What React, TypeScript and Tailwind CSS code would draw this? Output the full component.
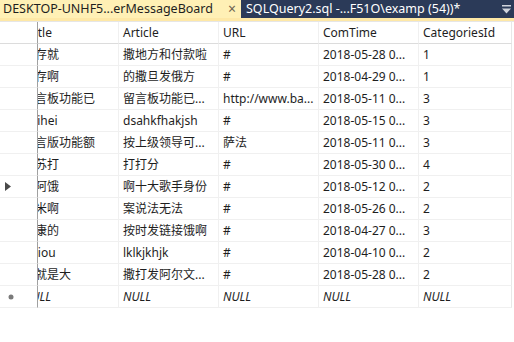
import React from "react";

const rows: { t: string; a: string; u: string; c: string; k: string }[] = [
  { t: "保存就", a: "撒地方和付款啦", u: "#", c: "2018-05-28 0...", k: "1" },
  { t: "保存啊", a: "的撒旦发俄方", u: "#", c: "2018-04-29 0...", k: "1" },
  { t: "留言板功能已", a: "留言板功能已...", u: "http://www.ba...", c: "2018-05-11 0...", k: "3" },
  { t: "heihei", a: "dsahkfhakjsh", u: "#", c: "2018-05-15 0...", k: "3" },
  { t: "留言版功能额", a: "按上级领导可...", u: "萨法", c: "2018-05-11 0...", k: "3" },
  { t: "小苏打", a: "打打分", u: "#", c: "2018-05-30 0...", k: "4" },
  { t: "哈阿饿", a: "啊十大歌手身份", u: "#", c: "2018-05-12 0...", k: "2" },
  { t: "大米啊", a: "案说法无法", u: "#", c: "2018-05-26 0...", k: "2" },
  { t: "健康的", a: "按时发链接饿啊", u: "#", c: "2018-04-27 0...", k: "3" },
  { t: "ghiou", a: "lklkjkhjk", u: "#", c: "2018-04-10 0...", k: "2" },
  { t: "成就是大", a: "撒打发阿尔文...", u: "#", c: "2018-05-28 0...", k: "2" },
];

const font = { fontFamily: '"Noto Sans", "Noto Sans CJK SC", sans-serif' };

function Cell({ children, last }: { children: React.ReactNode; last?: boolean }) {
  return (
    <div
      className={`h-[22px] overflow-hidden whitespace-nowrap border-b border-[#f0f0f0] pl-[4px] leading-[21px] ${
        last ? "border-r border-r-[#e8e8e8]" : "border-r border-r-[#f0f0f0]"
      }`}
    >
      {children}
    </div>
  );
}

function TitleCell({ children }: { children: React.ReactNode }) {
  return (
    <div className="h-[22px] overflow-hidden whitespace-nowrap border-b border-[#f0f0f0] border-r border-r-[#f0f0f0] leading-[21px]">
      <div className="ml-[-15px]">{children}</div>
    </div>
  );
}

export default function App() {
  return (
    <div className="w-[514px] h-[342px] bg-white overflow-hidden text-[12px] text-[#1e1e1e]" style={font}>
      {/* tab bar */}
      <div className="flex h-[18px] bg-[#2b3a58]">
        <div className="flex w-[241px] items-center bg-[#fff0b5] pl-[3px] text-[12.5px] text-[#1e1e1e]">
          <span className="leading-[18px]">DESKTOP-UNHF5...erMessageBoard</span>
          <span className="ml-auto mr-[5px] text-[14px] leading-[18px] text-[#6b6250]">×</span>
        </div>
        <div className="flex flex-1 items-center pl-[5px] text-[12.5px] text-white">
          <span className="leading-[18px]">SQLQuery2.sql -...F51O\examp (54))*</span>
          <svg className="ml-auto mr-[3px]" width="9" height="9" viewBox="0 0 9 9">
            <rect x="0" y="0" width="9" height="1.5" fill="#d0d4dc" />
            <path d="M0 3.5 L9 3.5 L4.5 8.5 Z" fill="#d0d4dc" />
          </svg>
        </div>
      </div>
      <div className="h-[3px] bg-[#fee8a6]" />
      <div className="h-[1px] bg-[#e6e6e6]" />

      {/* grid */}
      <div className="grid grid-cols-[38px_81px_100px_100px_100px_93px]">
        {/* header */}
        <div className="h-[22px] border-b border-[#dcdcdc] border-r border-r-[#a0a0a0]" />
        <div className="h-[22px] overflow-hidden whitespace-nowrap border-b border-[#dcdcdc] border-r border-r-[#f0f0f0] leading-[22px]">
          <div className="ml-[-10px]">Title</div>
        </div>
        <div className="h-[22px] border-b border-[#dcdcdc] border-r border-r-[#f0f0f0] pl-[4px] leading-[22px]">Article</div>
        <div className="h-[22px] border-b border-[#dcdcdc] border-r border-r-[#f0f0f0] pl-[4px] leading-[22px]">URL</div>
        <div className="h-[22px] border-b border-[#dcdcdc] border-r border-r-[#f0f0f0] pl-[4px] leading-[22px]">ComTime</div>
        <div className="h-[22px] border-b border-[#dcdcdc] border-r border-r-[#e8e8e8] pl-[4px] leading-[22px]">CategoriesId</div>

        {rows.map((r, i) => (
          <React.Fragment key={i}>
            <div className="flex h-[22px] items-center border-b border-[#f0f0f0] border-r border-r-[#a0a0a0] pl-[5px]">
              {i === 6 && (
                <svg width="6" height="9" viewBox="0 0 6 9">
                  <path d="M0 0 L6 4.5 L0 9 Z" fill="#4a4a4a" />
                </svg>
              )}
            </div>
            <TitleCell>{r.t}</TitleCell>
            <Cell>{r.a}</Cell>
            <Cell>{r.u}</Cell>
            <Cell>{r.c}</Cell>
            <Cell last>{r.k}</Cell>
          </React.Fragment>
        ))}

        {/* new row */}
        <div className="flex h-[22px] items-center border-b border-[#f0f0f0] border-r border-r-[#a0a0a0] pl-[8px]">
          <svg width="6" height="6" viewBox="0 0 6 6">
            <circle cx="3" cy="3" r="2.5" fill="#7a7a7a" />
          </svg>
        </div>
        <TitleCell>
          <i>NULL</i>
        </TitleCell>
        <Cell>
          <i>NULL</i>
        </Cell>
        <Cell>
          <i>NULL</i>
        </Cell>
        <Cell>
          <i>NULL</i>
        </Cell>
        <Cell last>
          <i>NULL</i>
        </Cell>
      </div>
    </div>
  );
}
